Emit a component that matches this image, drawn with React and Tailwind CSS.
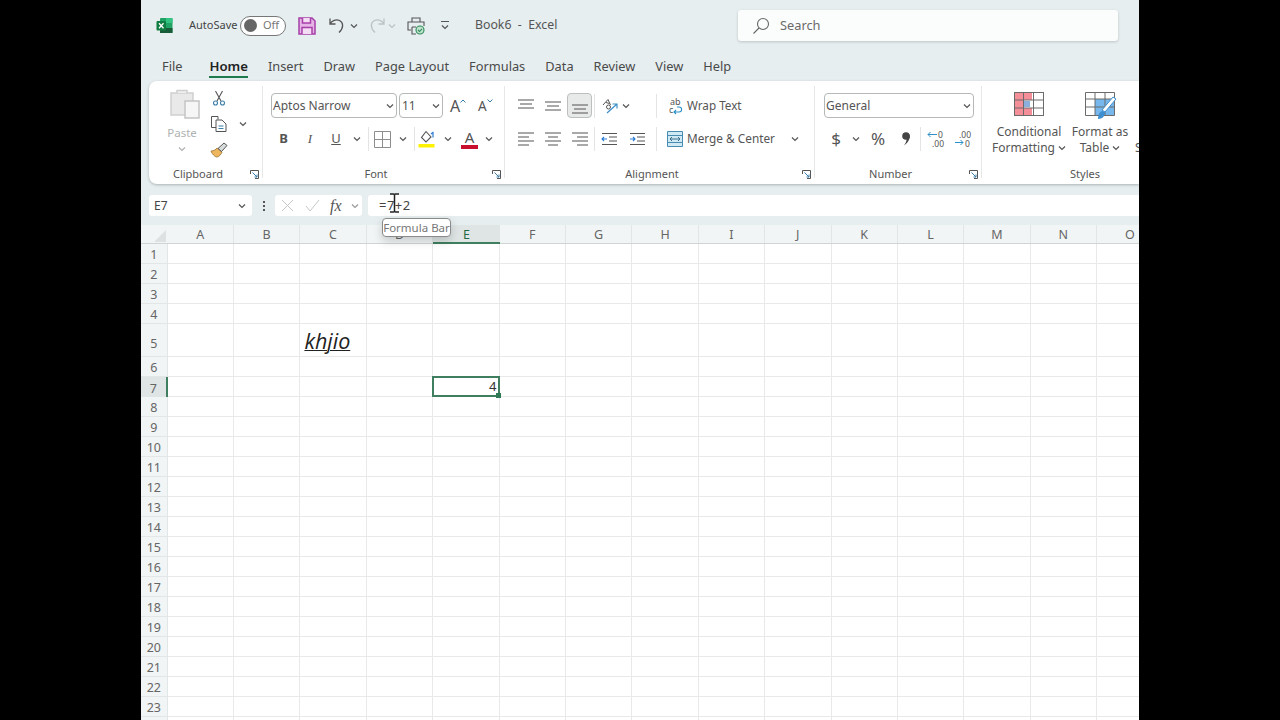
import React from "react";

const Chev = ({ c = "#555" }) => (
  <svg width="8" height="6" viewBox="0 0 8 6" fill="none" stroke={c} strokeWidth="1.2"><path d="M1 1.5 4 4.5 7 1.5" /></svg>
);
const Caret = ({ up }) => (
  <svg width="6" height="4" viewBox="0 0 6 4" fill="none" stroke="#3d7fa8" strokeWidth="1">{up ? <path d="M.5 3.500 3 1 5.500 3.500" /> : <path d="M.5.500 3 3 5.500.5" />}</svg>
);
const Launcher = () => (
  <svg width="9" height="9" viewBox="0 0 9 9" fill="none" stroke="#555" strokeWidth="1"><path d="M.5 4V.5H8.500V8.500H5" /><path d="M2.500 2.500 7 7M7 4.500V7H4.500" stroke="#3d7fa8" /></svg>
);
const Lines = ({ ys, xs }) => (
  <svg width="18" height="18" viewBox="0 0 18 18" stroke="#555" strokeWidth="1.1" fill="none">
    {ys.map((y, i) => <path key={i} d={`M${xs[i][0]} ${y}H${xs[i][1]}`} />)}
  </svg>
);
const Sep = ({ h = "h-[24px]" }) => <div className={`w-px ${h} bg-[#e3e5e5]`} />;

const Excel = () => (
  <svg width="17" height="17" viewBox="0 0 17 17">
    <rect x="4" y="1" width="12.500" height="15" rx="1" fill="#21a366" />
    <rect x="10" y="1" width="6.500" height="5" fill="#33c481" />
    <rect x="4" y="11" width="12.500" height="5" fill="#185c37" />
    <rect x="0.500" y="4" width="9.500" height="9.500" rx="1" fill="#107c41" />
    <path d="M3 6.200 7.500 11.300M7.500 6.200 3 11.300" stroke="#fff" strokeWidth="1.300" />
  </svg>
);
const Save = () => (
  <svg width="18" height="18" viewBox="0 0 18 18" fill="#e6b3e6" stroke="#a63fa8" strokeWidth="1.500">
    <path d="M1 1H14L17 4V17H1Z" />
    <path d="M4.500 1V6H12.500V1M4 17V10.500H14V17" fill="#f4dcf4" />
  </svg>
);
const Undo = ({ c = "#555" }) => (
  <svg width="18" height="17" viewBox="0 0 18 17" fill="none" stroke={c} strokeWidth="1.300">
    <path d="M2 1.500V7H7.500M2 7C4 3.500 8 2 11.500 3.500 15.500 5.500 16 10.500 11 15.500" />
  </svg>
);
const Print = () => (
  <svg width="18" height="18" viewBox="0 0 18 18" fill="none" stroke="#555" strokeWidth="1.100">
    <path d="M5 5V1H13V5M4 13H1V5H17V9M5 10H9M5 10V17H9" />
    <circle cx="13" cy="13" r="4" fill="#bfe3cf" stroke="#2e8b57" />
    <path d="M11 13 12.500 14.500 15 11.800" stroke="#2e8b57" />
  </svg>
);
const Cut = () => (
  <svg width="14" height="16" viewBox="0 0 14 16" fill="none" stroke="#555" strokeWidth="1.100">
    <path d="M3.500 1 9 11M10.500 1 5 11" />
    <circle cx="3.500" cy="13" r="2" stroke="#3d7fa8" />
    <circle cx="10.500" cy="13" r="2" stroke="#3d7fa8" />
  </svg>
);
const Copy = () => (
  <svg width="18" height="18" viewBox="0 0 18 18" fill="#fff" stroke="#555" strokeWidth="1">
    <path d="M1.500 1.500H8V4.500M1.500 1.500V12.500H6" />
    <path d="M6 5H12L16 9V16.500H6Z" />
    <path d="M8.500 11H13.500M8.500 13.500H13.500" stroke="#3d7fa8" />
  </svg>
);
const Brush = () => (
  <svg width="18" height="16" viewBox="0 0 18 16">
    <path d="M1 9C4 9 6 7.500 7 6L12 10C11 12.500 9 15 7 15 5 15 2 12 1 9Z" fill="#eeb75e" stroke="#9a7430" strokeWidth=".8" />
    <path d="M8 6.500 14 1 17 3.500 11.500 9.500Z" fill="#d9dcdc" stroke="#555" strokeWidth="1" />
  </svg>
);
const PasteIcon = () => (
  <svg width="30" height="31" viewBox="0 0 30 31" fill="none">
    <path d="M1 5H23V27H1Z" fill="#e9e9e9" stroke="#cfcfcf" strokeWidth="1.500" />
    <path d="M7 5V2.500H17V5" fill="#efefef" stroke="#cfcfcf" strokeWidth="1.500" />
    <path d="M15 13H29V30H15Z" fill="#f6f6f6" stroke="#c4c4c4" strokeWidth="1.500" />
  </svg>
);
const Borders = () => (
  <svg width="17" height="17" viewBox="0 0 17 17" fill="none" stroke="#8d8d8d"><path d="M.5.500H16.500V16.500H.5ZM8.500.5V16.500M.5 8.500H16.500" /></svg>
);
const Fill = () => (
  <svg width="18" height="18" viewBox="0 0 18 18" fill="none">
    <path d="M8 1.500 13 7 8 12 3.500 7.500Z" fill="#fff" stroke="#555" strokeWidth="1.100" />
    <path d="M13 4 15.500 2M15 7.500V3" stroke="#2b7cd3" strokeWidth="1.200" />
    <rect x="0.500" y="14" width="16" height="3.500" fill="#fff200" />
  </svg>
);
const Orient = () => (
  <svg width="18" height="18" viewBox="0 0 18 18" fill="none" stroke="#555" strokeWidth="1">
    <path d="M2 8 7 2.500 9.500 8M5 5.500 8.500 6.500" />
    <circle cx="7.500" cy="10" r="2" />
    <path d="M6 16 16 7M11.500 7H16V11.500" stroke="#3d8fc8" strokeWidth="1.200" />
  </svg>
);
const Indent = ({ flip }) => (
  <svg width="17" height="14" viewBox="0 0 17 14" fill="none" stroke="#555" strokeWidth="1.100">
    <path d="M1 1.500H16M8 5H16M8 9H16M1 12.500H16" />
    {flip ? <path d="M1 7H6M4 5 6 7 4 9" stroke="#2b7cd3" /> : <path d="M6 7H1M3 5 1 7 3 9" stroke="#2b7cd3" />}
  </svg>
);
const WrapIcon = () => (
  <svg width="18" height="18" viewBox="0 0 18 18" fill="none">
    <text x="1" y="8" fontSize="9" fill="#555" fontFamily="Noto Sans">ab</text>
    <text x="0" y="16" fontSize="9" fill="#555" fontFamily="Noto Sans">c</text>
    <path d="M5 15H10C13.500 15 13.500 10 10 10H8M7 13 5 15 7 17" stroke="#2b8fc8" strokeWidth="1.100" />
  </svg>
);
const Merge = () => (
  <svg width="16" height="16" viewBox="0 0 16 16" fill="#cfe9f5" stroke="#4a8caf">
    <path d="M.5.500H15.500V15.500H.5Z" />
    <path d="M.5 4.500H15.500M.5 11.500H15.500" />
    <path d="M3 8H13M5 6 3 8 5 10M11 6 13 8 11 10" fill="none" stroke="#3a6e8c" />
  </svg>
);
const Decimal = ({ more }) => (
  <svg width="18" height="18" viewBox="0 0 18 18" fill="none">
    {more ? (
      <>
        <text x="5" y="7.500" fontSize="8.500" fill="#555" fontFamily="Noto Sans">.00</text>
        <text x="11" y="16.500" fontSize="8.500" fill="#555" fontFamily="Noto Sans">0</text>
        <path d="M1 12.500H9M6.500 10 9 12.500 6.500 15" stroke="#2b8fc8" />
      </>
    ) : (
      <>
        <text x="11" y="7.500" fontSize="8.500" fill="#555" fontFamily="Noto Sans">0</text>
        <text x="5" y="16.500" fontSize="8.500" fill="#555" fontFamily="Noto Sans">.00</text>
        <path d="M10 4.500H1M3.500 2 1 4.500 3.500 7" stroke="#2b8fc8" />
      </>
    )}
  </svg>
);
const Comma = () => (
  <svg width="12" height="16" viewBox="0 0 12 16" fill="#444">
    <circle cx="6" cy="5" r="3.800" />
    <path d="M6.500 7C9.500 6 10 3 9 2 10.800 4 10.500 10 4 14.500 5.500 12 7 10 6.500 7Z" />
  </svg>
);
const CondFmt = () => (
  <svg width="30" height="24" viewBox="0 0 30 24" stroke="#6b6b6b" strokeWidth="1">
    <rect x=".5" y=".5" width="29" height="23" fill="#fff" />
    <path d="M1 1H18V8H1ZM1 16H18V23H1Z" fill="#f48f9a" stroke="none" />
    <path d="M1 8H9V16H1Z" fill="#f48f9a" stroke="none" />
    <path d="M9 9H16V15H9Z" fill="#8bb0de" stroke="none" />
    <path d="M.5 8H29.500M.5 16H29.500M9.500.5V23.500M19.500.5V23.500" fill="none" />
  </svg>
);
const FmtTable = () => (
  <svg width="32" height="28" viewBox="0 0 32 28" stroke="#6b6b6b" strokeWidth="1">
    <path d="M10 7H29V23H10Z" fill="#76b8ee" stroke="none" />
    <path d="M.5.500H29.500V23.500H.5ZM.5 7H29.500M.5 15H29.500M10 .5V23.500M20 .5V23.500" fill="none" />
    <path d="M31 7 20 20 17 18 28 5Z" fill="#fff" stroke="#3e8fcf" />
    <path d="M13 27C13 22 15 19 18 19L20 21C20 24 17 27 13 27Z" fill="#3e8fcf" stroke="none" />
  </svg>
);
const Search = () => (
  <svg width="18" height="18" viewBox="0 0 18 18" fill="none" stroke="#666" strokeWidth="1.100">
    <circle cx="11" cy="7" r="5.500" />
    <path d="M7 11 1.500 16.500" />
  </svg>
);

const FONT = { fontFamily: '"Noto Sans", sans-serif' };
const COLS = ["A","B","C","D","E","F","G","H","I","J","K","L","M","N","O"];
const ROWS = Array.from({ length: 24 }, (_, i) => i + 1);

function Footer({ label }) {
  return (
    <div className="relative h-[14px] shrink-0 text-[11px] text-[#555] leading-[20px] text-center pr-[15px]">
      {label}
      <span className="absolute right-[3px] top-[6px] flex"><Launcher /></span>
    </div>
  );
}

export default function App() {
  return (
    <div className="w-[1280px] h-[720px] overflow-hidden bg-black flex justify-start" style={FONT}>
      <div className="ml-[141px] w-[998px] h-[720px] overflow-hidden bg-[#e6eef0] flex flex-col relative">
        {/* Title bar */}
        <div className="h-[51px] shrink-0 flex items-center text-[12px] text-[#444]">
          <span className="ml-[15px] flex"><Excel /></span>
          <span className="ml-[16px] w-[51px] text-[11px]">AutoSave</span>
          <div className="w-[46px] h-[20px] rounded-full border border-[#777] bg-white flex items-center pl-[3px]">
            <span className="w-[13px] h-[13px] rounded-full bg-[#666]" />
            <span className="ml-[6px] text-[11px] text-[#777]">Off</span>
          </div>
          <span className="ml-[12px] flex"><Save /></span>
          <span className="ml-[12px] flex"><Undo /></span>
          <span className="ml-[4px] flex"><Chev /></span>
          <span className="ml-[10px] flex -scale-x-100"><Undo c="#bcc3c5" /></span>
          <span className="ml-[2px] flex"><Chev c="#bcc3c5" /></span>
          <span className="ml-[11px] flex"><Print /></span>
          <span className="ml-[16px] w-[8px] flex flex-col items-center gap-[2px]">
            <span className="w-[8px] h-px bg-[#555]" />
            <Chev />
          </span>
          <span className="ml-[26px] w-[263px] text-[12.300px] text-[#555]">Book6 &nbsp;-&nbsp; Excel</span>
          <div className="w-[380px] h-[31px] rounded-[3px] bg-[#fbfcfc] shadow-[0_1px_3px_rgba(0,0,0,0.18)] flex items-center pl-[14px] text-[12.800px] text-[#6a6a6a]">
            <Search />
            <span className="ml-[10px]">Search</span>
          </div>
        </div>
        {/* Tabs */}
        <div className="h-[30px] shrink-0 flex pl-[21px] gap-[20px] text-[12.800px] text-[#4a4a4a] leading-[30px]">
          <span className="mr-[7px]">File</span>
          <span className="relative font-semibold text-[13.200px] text-[#222]">Home<span className="absolute left-0 right-0 bottom-[3px] h-[2px] bg-[#1f7a4d]" /></span>
          <span>Insert</span>
          <span>Draw</span>
          <span>Page Layout</span>
          <span>Formulas</span>
          <span>Data</span>
          <span>Review</span>
          <span>View</span>
          <span>Help</span>
        </div>
        {/* Ribbon */}
        <div className="ml-[8px] h-[103px] shrink-0 bg-white rounded-l-[8px] shadow-[0_1px_3px_rgba(0,0,0,0.25)] flex text-[#444] overflow-hidden">
          {/* Clipboard */}
          <div className="w-[114px] shrink-0 flex flex-col mt-[5px] mb-[6px] pt-[2px] border-r border-[#e6e8e8]">
            <div className="h-[76px] shrink-0 flex">
              <div className="ml-[21px] w-[30px] flex flex-col items-center">
                <PasteIcon />
                <span className="mt-[6px] mr-[6px] text-[11.500px] text-[#aeb2b2] leading-[16px]">Paste</span>
                <span className="mt-[5px] mr-[6px] flex"><Chev c="#aeb2b2" /></span>
              </div>
              <div className="ml-[10px] w-[36px] flex flex-col items-start">
                <span className="ml-[2px] mt-[2px] flex"><Cut /></span>
                <span className="mt-[9px] flex items-center"><Copy /><span className="ml-[11px] flex"><Chev /></span></span>
                <span className="mt-[9px] flex"><Brush /></span>
              </div>
            </div>
            <Footer label="Clipboard" />
          </div>
          {/* Font */}
          <div className="w-[242px] shrink-0 flex flex-col mt-[5px] mb-[6px] pt-[7px] border-r border-[#e6e8e8]">
            <div className="h-[71px] shrink-0 flex flex-col">
              <div className="flex items-center h-[25px] pl-[8px]">
                <div className="w-[126px] h-[25px] border border-[#b4b8b8] rounded-[4px] flex items-center justify-between pl-[1px] pr-[2px] text-[12px] text-[#555]">Aptos Narrow<Chev /></div>
                <div className="ml-[2px] w-[44px] h-[25px] border border-[#b4b8b8] rounded-[4px] flex items-center justify-between pl-[2px] pr-[2px] text-[12px] text-[#555]">11<Chev /></div>
                <span className="ml-[7px] w-[17px] text-[16px] text-[#555] flex items-start leading-[20px]">A<span className="flex mt-[3px]"><Caret up /></span></span>
                <span className="ml-[11px] w-[17px] text-[13.500px] text-[#555] flex items-start leading-[20px]">A<span className="flex mt-[3px]"><Caret /></span></span>
              </div>
              <div className="flex items-center h-[22px] mt-[10px] pl-[7px] text-[#555]">
                <span className="w-[27px] text-center text-[13px] font-bold">B</span>
                <span className="w-[26px] text-center text-[13px] italic" style={{ fontFamily: '"Liberation Serif", serif' }}>I</span>
                <span className="w-[26px] text-center text-[13px] underline">U</span>
                <span className="w-[16px] flex justify-center"><Chev /></span>
                <span className="ml-[3px]"><Sep /></span>
                <span className="ml-[5px] flex"><Borders /></span>
                <span className="ml-[8px] flex"><Chev /></span>
                <span className="ml-[7px]"><Sep /></span>
                <span className="ml-[3px] flex"><Fill /></span>
                <span className="ml-[8px] flex"><Chev /></span>
                <span className="ml-[9px] flex flex-col items-center w-[17px] text-[15px] leading-[15px]">A<span className="w-[17px] h-[4px] bg-[#c8102e]" /></span>
                <span className="ml-[7px] flex"><Chev /></span>
              </div>
            </div>
            <Footer label="Font" />
          </div>
          {/* Alignment */}
          <div className="w-[310px] shrink-0 flex flex-col mt-[5px] mb-[6px] pt-[7px] border-r border-[#e6e8e8]">
            <div className="h-[71px] shrink-0 flex flex-col">
              <div className="flex items-center h-[25px] pl-[12px]">
                <span className="flex"><Lines ys={[3,7,11]} xs={[[1,17],[3,15],[1,17]]} /></span>
                <span className="ml-[9px] flex"><Lines ys={[5,9,13]} xs={[[1,17],[3,15],[1,17]]} /></span>
                <span className="ml-[5px] w-[25px] h-[25px] rounded-[4px] bg-[#e8e9e9] border border-[#bdbfbf] flex items-center justify-center"><Lines ys={[8,12,16]} xs={[[1,17],[3,15],[1,17]]} /></span>
                <span className="ml-[2px]"><Sep /></span>
                <span className="ml-[6px] flex"><Orient /></span>
                <span className="ml-[3px] flex"><Chev /></span>
                <span className="ml-[26px]"><Sep /></span>
                <span className="ml-[12px] flex"><WrapIcon /></span>
                <span className="text-[11.700px] text-[#555]">Wrap Text</span>
              </div>
              <div className="flex items-center h-[22px] mt-[10px] pl-[12px]">
                <span className="flex"><Lines ys={[3,7,11,15]} xs={[[1,17],[1,12],[1,17],[1,12]]} /></span>
                <span className="ml-[9px] flex"><Lines ys={[3,7,11,15]} xs={[[1,17],[4,14],[1,17],[4,14]]} /></span>
                <span className="ml-[9px] flex"><Lines ys={[3,7,11,15]} xs={[[1,17],[6,17],[1,17],[6,17]]} /></span>
                <span className="ml-[5px]"><Sep /></span>
                <span className="ml-[6px] flex"><Indent /></span>
                <span className="ml-[11px] flex"><Indent flip /></span>
                <span className="ml-[10px]"><Sep /></span>
                <span className="ml-[10px] flex"><Merge /></span>
                <span className="ml-[4px] w-[104px] text-[11.800px] text-[#555]">Merge &amp; Center</span>
                <span className="flex"><Chev /></span>
              </div>
            </div>
            <Footer label="Alignment" />
          </div>
          {/* Number */}
          <div className="w-[167px] shrink-0 flex flex-col mt-[5px] mb-[6px] pt-[7px] border-r border-[#e6e8e8]">
            <div className="h-[71px] shrink-0 flex flex-col">
              <div className="ml-[9px] w-[150px] h-[25px] border border-[#b4b8b8] rounded-[4px] flex items-center justify-between pl-[1px] pr-[2px] text-[12px] text-[#555]">General<Chev /></div>
              <div className="flex items-center h-[22px] mt-[10px] pl-[15px] text-[#555]">
                <span className="w-[12px] text-center text-[17px]">$</span>
                <span className="ml-[6px] w-[16px] flex justify-center"><Chev /></span>
                <span className="ml-[4px] w-[20px] text-center text-[17px]">%</span>
                <span className="ml-[12px] flex"><Comma /></span>
                <span className="ml-[8px]"><Sep /></span>
                <span className="ml-[6px] flex"><Decimal /></span>
                <span className="ml-[9px] flex"><Decimal more /></span>
              </div>
            </div>
            <Footer label="Number" />
          </div>
          {/* Styles */}
          <div className="w-[157px] shrink-0 flex flex-col pt-[11px]">
            <div className="h-[73px] shrink-0 flex text-[12px] text-[#555] leading-[16px]">
              <div className="w-[94px] shrink-0 flex flex-col items-center">
                <span className="flex"><CondFmt /></span>
                <span className="mt-[8px]">Conditional</span>
                <span className="flex items-center gap-[3px]">Formatting <Chev /></span>
              </div>
              <div className="w-[48px] shrink-0 flex flex-col items-center">
                <span className="flex ml-[2px] h-[24px]"><FmtTable /></span>
                <span className="mt-[8px] whitespace-nowrap">Format as</span>
                <span className="flex items-center gap-[3px]">Table <Chev /></span>
              </div>
              <span className="ml-[11px] mt-[48px]">S</span>
            </div>
            <div className="h-[19px] shrink-0 text-[11px] text-[#555] leading-[18px] text-center pl-[49px]">Styles</div>
          </div>
        </div>
        {/* Formula bar */}
        <div className="h-[21px] mt-[11px] shrink-0 flex items-center text-[12px] text-[#444]">
          <div className="ml-[8px] w-[103px] h-[21px] bg-white rounded-[3px] flex items-center justify-between pl-[5px] pr-[6px]">E7<Chev /></div>
          <div className="w-[23px] flex flex-col items-center gap-[2px]">
            <span className="w-[2px] h-[2px] bg-[#555]" /><span className="w-[2px] h-[2px] bg-[#555]" /><span className="w-[2px] h-[2px] bg-[#555]" />
          </div>
          <div className="w-[87px] h-[21px] bg-white rounded-[3px] flex items-center pl-[6px]">
            <svg width="13" height="13" viewBox="0 0 13 13" stroke="#c4c8c8" fill="none"><path d="M1 1 12 12M12 1 1 12" /></svg>
            <svg className="ml-[11px]" width="15" height="13" viewBox="0 0 15 13" stroke="#c4c8c8" fill="none"><path d="M1 7 5 12 14 1" /></svg>
            <span className="ml-[10px] w-[16px] text-[16px] italic text-[#555]" style={{ fontFamily: '"Liberation Serif", serif' }}>fx</span>
            <span className="ml-[5px] flex"><Chev c="#999" /></span>
          </div>
          <div className="ml-[6px] flex-1 h-[21px] bg-white rounded-l-[3px] flex items-center pl-[11px] text-[13px] tracking-[0.5px]">=7+2</div>
        </div>
        {/* Column headers */}
        <div className="h-[19px] mt-[9px] shrink-0 flex bg-[#f2f5f5] text-[12.500px] text-[#666] border-b border-[#cfd4d4]">
          <div className="w-[26.600px] shrink-0 flex items-end justify-end pr-[2px] pb-[1px]">
            <svg width="12" height="12" viewBox="0 0 12 12"><path d="M12 0V12H0Z" fill="#dde1e1" /></svg>
          </div>
          {COLS.map((c) => (
            <div key={c} className={c === "E" ? "w-[66.400px] shrink-0 text-center leading-[20px] bg-[#dfe5e5] text-[#1f6b45] border-b-2 border-[#3f7f5f] h-[19px]" : "w-[66.400px] shrink-0 text-center leading-[20px] border-r border-[#e3e6e6]"}>{c}</div>
          ))}
        </div>
        {/* Grid */}
        <div className="flex-1 flex flex-col bg-white overflow-hidden">
          {ROWS.map((r) => (
            <div key={r} className={r === 5 ? "h-[33px] shrink-0 flex" : "h-[20px] shrink-0 flex"}>
              <div className={r === 7 ? "w-[26.600px] shrink-0 bg-[#dfe5e5] border-r-2 border-[#3f7f5f] text-[12.500px] text-[#666] flex items-center justify-center pt-[4px]" : r === 5 ? "w-[26.600px] shrink-0 bg-[#f2f5f5] border-r border-b border-[#e3e6e6] text-[12.500px] text-[#666] flex items-center justify-center pt-[8px]" : "w-[26.600px] shrink-0 bg-[#f2f5f5] border-r border-b border-[#e3e6e6] text-[12.500px] text-[#666] flex items-center justify-center pt-[4px]"}>{r}</div>
              {COLS.map((c) => (
                <div key={c} className="relative w-[66.400px] shrink-0 border-r border-b border-[#e8eaea]">
                  {r === 5 && c === "C" && (
                    <span className="absolute left-[4px] bottom-[1px] text-[21.500px] leading-[28px] italic underline decoration-1 text-[#222]" style={{ fontFamily: '"Open Sans", sans-serif' }}>khjio</span>
                  )}
                  {r === 7 && c === "E" && (
                    <div className="absolute -left-[1px] -top-[1px] -right-[1px] -bottom-[1px] border-2 border-[#3f7f5f] flex items-center justify-end pr-[1px] text-[13px] text-[#333] z-10">
                      4
                      <span className="absolute -right-[3px] -bottom-[3px] w-[5px] h-[5px] bg-[#2f7a55]" />
                    </div>
                  )}
                </div>
              ))}
            </div>
          ))}
        </div>
        {/* Tooltip */}
        <div className="absolute left-[241px] top-[218px] w-[69px] h-[19px] rounded-[4px] border border-[#8a8a8a] bg-white text-[11.500px] text-[#777] leading-[17px] text-center whitespace-nowrap overflow-hidden shadow-[0_4px_10px_rgba(0,0,0,0.18)]">Formula Bar</div>
        {/* I-beam cursor */}
        <svg className="absolute left-[249px] top-[193px]" width="9" height="20" viewBox="0 0 9 20" fill="none" stroke="#222" strokeWidth="1.500"><path d="M0 1H3.500Q4.500 1 4.500 2V18Q4.500 19 3.500 19H0M9 1H5.500Q4.500 1 4.500 2M4.500 18Q4.500 19 5.500 19H9" /></svg>
      </div>
    </div>
  );
}
